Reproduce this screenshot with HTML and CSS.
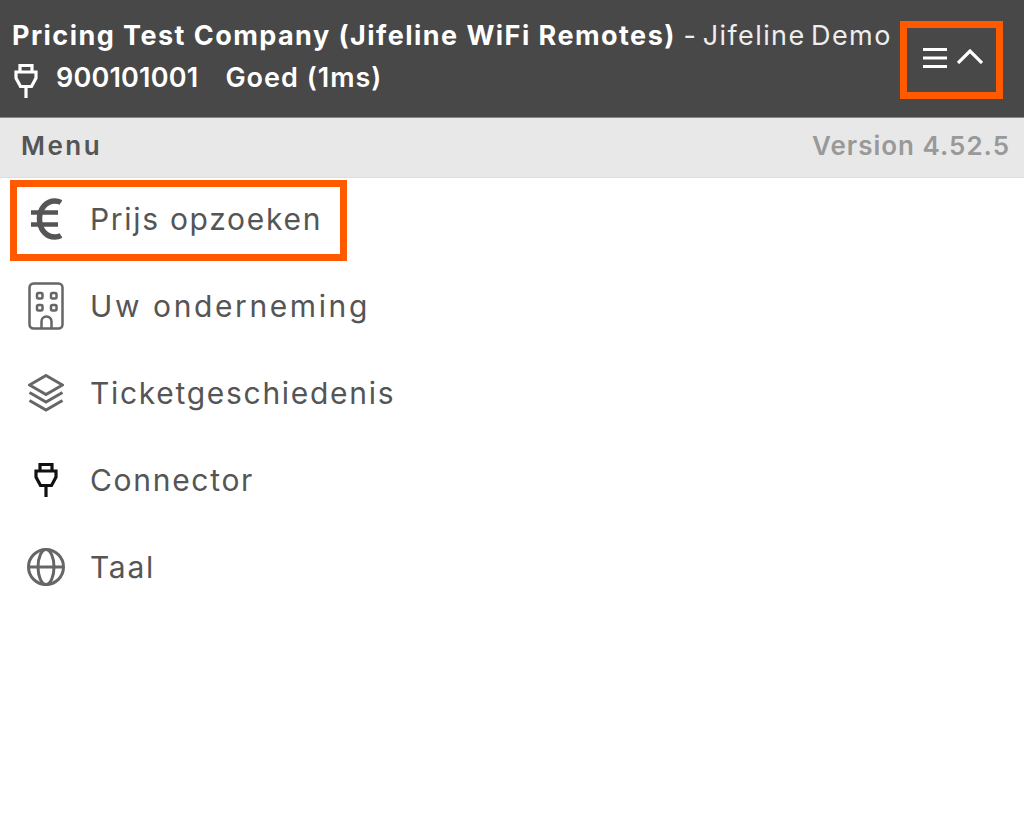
FILE: index.html
```html
<!DOCTYPE html>
<html lang="en">
<head>
    <meta charset="UTF-8">
    <meta name="viewport" content="width=device-width, initial-scale=1.0">
    <title>Menu</title>
    <link rel="stylesheet" href="styles.css">
</head>
<body>

    <header class="topbar">
        <div class="info">
            <div class="company"><b>Pricing Test Company (Jifeline WiFi Remotes)</b> <span>- Jifeline Demo</span></div>
            <div class="status">
                <svg class="plug" viewBox="0 0 24 36" fill="none" stroke="currentColor" stroke-width="3.2">
                    <path d="M6 9V2.500h12V9M2 9h20v6l-4.500 8.500h-11L2 15zM12 24v11"/>
                </svg>
                <b class="num">900101001</b>
                <b class="state">Goed (1ms)</b>
            </div>
        </div>
        <button class="toggle">
            <svg class="bars" viewBox="0 0 24 22" stroke="currentColor" stroke-width="3">
                <path d="M0 2.500h24M0 11h24M0 19.500h24"/>
            </svg>
            <svg class="chevron" viewBox="0 0 26 15" fill="none" stroke="currentColor" stroke-width="3.200">
                <path d="M1 14L13 2l12 12"/>
            </svg>
        </button>
    </header>

    <div class="menubar">
        <span class="menu-title">Menu</span>
        <span class="version">Version 4.52.5</span>
    </div>

    <nav class="items">
        <a class="item current">
            <span class="icon">
                <svg width="32" height="42" viewBox="0 0 32 42" fill="none" stroke="#555" stroke-width="5.500">
                    <path d="M31 4.500C29 3.200 27 2.900 25 2.900 16.500 2.900 9.500 10 9.500 21S16.500 39.100 25 39.100c2 0 4-.3 6-1.600"/>
                    <path d="M1 14.500h27M1 26.500h27" stroke-width="4.500"/>
                </svg>
            </span>
            <span class="label">Prijs opzoeken</span>
        </a>
        <a class="item">
            <span class="icon">
                <svg width="36" height="48" viewBox="0 0 36 48" fill="none" stroke="#666" stroke-width="2.500">
                    <rect x="1.500" y="1.500" width="33" height="45" rx="4"/>
                    <rect x="9" y="11" width="5.500" height="5.500" rx="1.500"/>
                    <rect x="23" y="11" width="5.500" height="5.500" rx="1.500"/>
                    <rect x="9" y="23" width="5.500" height="5.500" rx="1.500"/>
                    <rect x="23" y="23" width="5.500" height="5.500" rx="1.500"/>
                    <path d="M13.500 46V39.500a5 5 0 0 1 10 0V46"/>
                </svg>
            </span>
            <span class="label wide">Uw onderneming</span>
        </a>
        <a class="item">
            <span class="icon">
                <svg width="36" height="38" viewBox="0 0 36 38" fill="none" stroke="#666" stroke-width="3">
                    <path d="M18 1.500L34.500 11 18 20.500 1.500 11z"/>
                    <path d="M1.500 18.500L18 28l16.500-9.500M1.500 26.500L18 36l16.500-9.500"/>
                </svg>
            </span>
            <span class="label">Ticketgeschiedenis</span>
        </a>
        <a class="item">
            <span class="icon">
                <svg width="26" height="36" viewBox="0 0 24 36" fill="none" stroke="#111" stroke-width="3.2">
                    <path d="M6 9V2.500h12V9M2 9h20v6l-4.500 8.500h-11L2 15zM12 24v11"/>
                </svg>
            </span>
            <span class="label">Connector</span>
        </a>
        <a class="item">
            <span class="icon">
                <svg width="38" height="38" viewBox="0 0 38 38" fill="none" stroke="#666" stroke-width="3">
                    <circle cx="19" cy="19" r="17.500"/>
                    <ellipse cx="19" cy="19" rx="8" ry="17.500"/>
                    <path d="M1.500 19h35"/>
                </svg>
            </span>
            <span class="label">Taal</span>
        </a>
    </nav>

</body>
</html>
```

FILE: styles.css
```css
/* General reset */
* {
    margin: 0;
    padding: 0;
    box-sizing: border-box;
    font-family: "Inter", "Noto Sans", sans-serif;
}

body {
    background-color: #fff;
    color: #555;
}

.topbar {
    display: flex;
    justify-content: space-between;
    height: 118px;
    padding: 21px 21px 0 12px;
    background-color: #484848;
    border-bottom: 1px solid #888;
    color: #fff;
}

.company {
    height: 30px;
    font-size: 27px;
    line-height: 30px;
    white-space: nowrap;
}

.company b {
    font-weight: 700;
    letter-spacing: 1.45px;
}

.company span {
    font-weight: 400;
    letter-spacing: 1.4px;
    word-spacing: -3.5px;
    color: #eee;
}

.status {
    display: flex;
    align-items: flex-start;
    margin-top: 8px;
    height: 38px;
    font-size: 27px;
    line-height: 38px;
}

.status b {
    font-weight: 600;
}

.plug {
    flex: none;
    width: 24px;
    height: 36px;
    margin: 4px 18px 0 2px;
}

.status .num {
    margin-right: 27px;
    letter-spacing: 0.2px;
}

.status .state {
    letter-spacing: 1px;
}

.toggle {
    display: flex;
    align-items: flex-start;
    gap: 10px;
    width: 103px;
    height: 78px;
    padding: 19px 0 0 16px;
    background: none;
    border: 7px solid #ff5a00;
    color: #fff;
}

.bars {
    width: 24px;
    height: 22px;
}

.chevron {
    width: 26px;
    height: 15px;
    margin-top: 2px;
}

.menubar {
    display: flex;
    justify-content: space-between;
    align-items: center;
    height: 60px;
    padding: 0 14px 5px 21px;
    background-color: #e8e8e8;
    border-bottom: 1px solid #ddd;
    font-size: 26px;
    font-weight: 600;
}

.menu-title {
    letter-spacing: 2.5px;
}

.version {
    color: #999;
    letter-spacing: 1px;
}

.items {
    display: flex;
    flex-direction: column;
    gap: 5px;
}

.item {
    display: flex;
    align-items: center;
    height: 82px;
    padding-left: 26px;
    font-size: 30px;
    position: relative;
    letter-spacing: 1.7px;
}

.icon {
    display: flex;
    justify-content: center;
    width: 40px;
    margin-right: 24px;
}

.wide {
    letter-spacing: 2.6px;
}

/* orange marker over the selected row */
.current::after {
    content: "";
    box-sizing: border-box;
    position: absolute;
    left: 10px;
    top: 2px;
    width: 337px;
    height: 81px;
    border: 7px solid #ff5a00;
}
```
